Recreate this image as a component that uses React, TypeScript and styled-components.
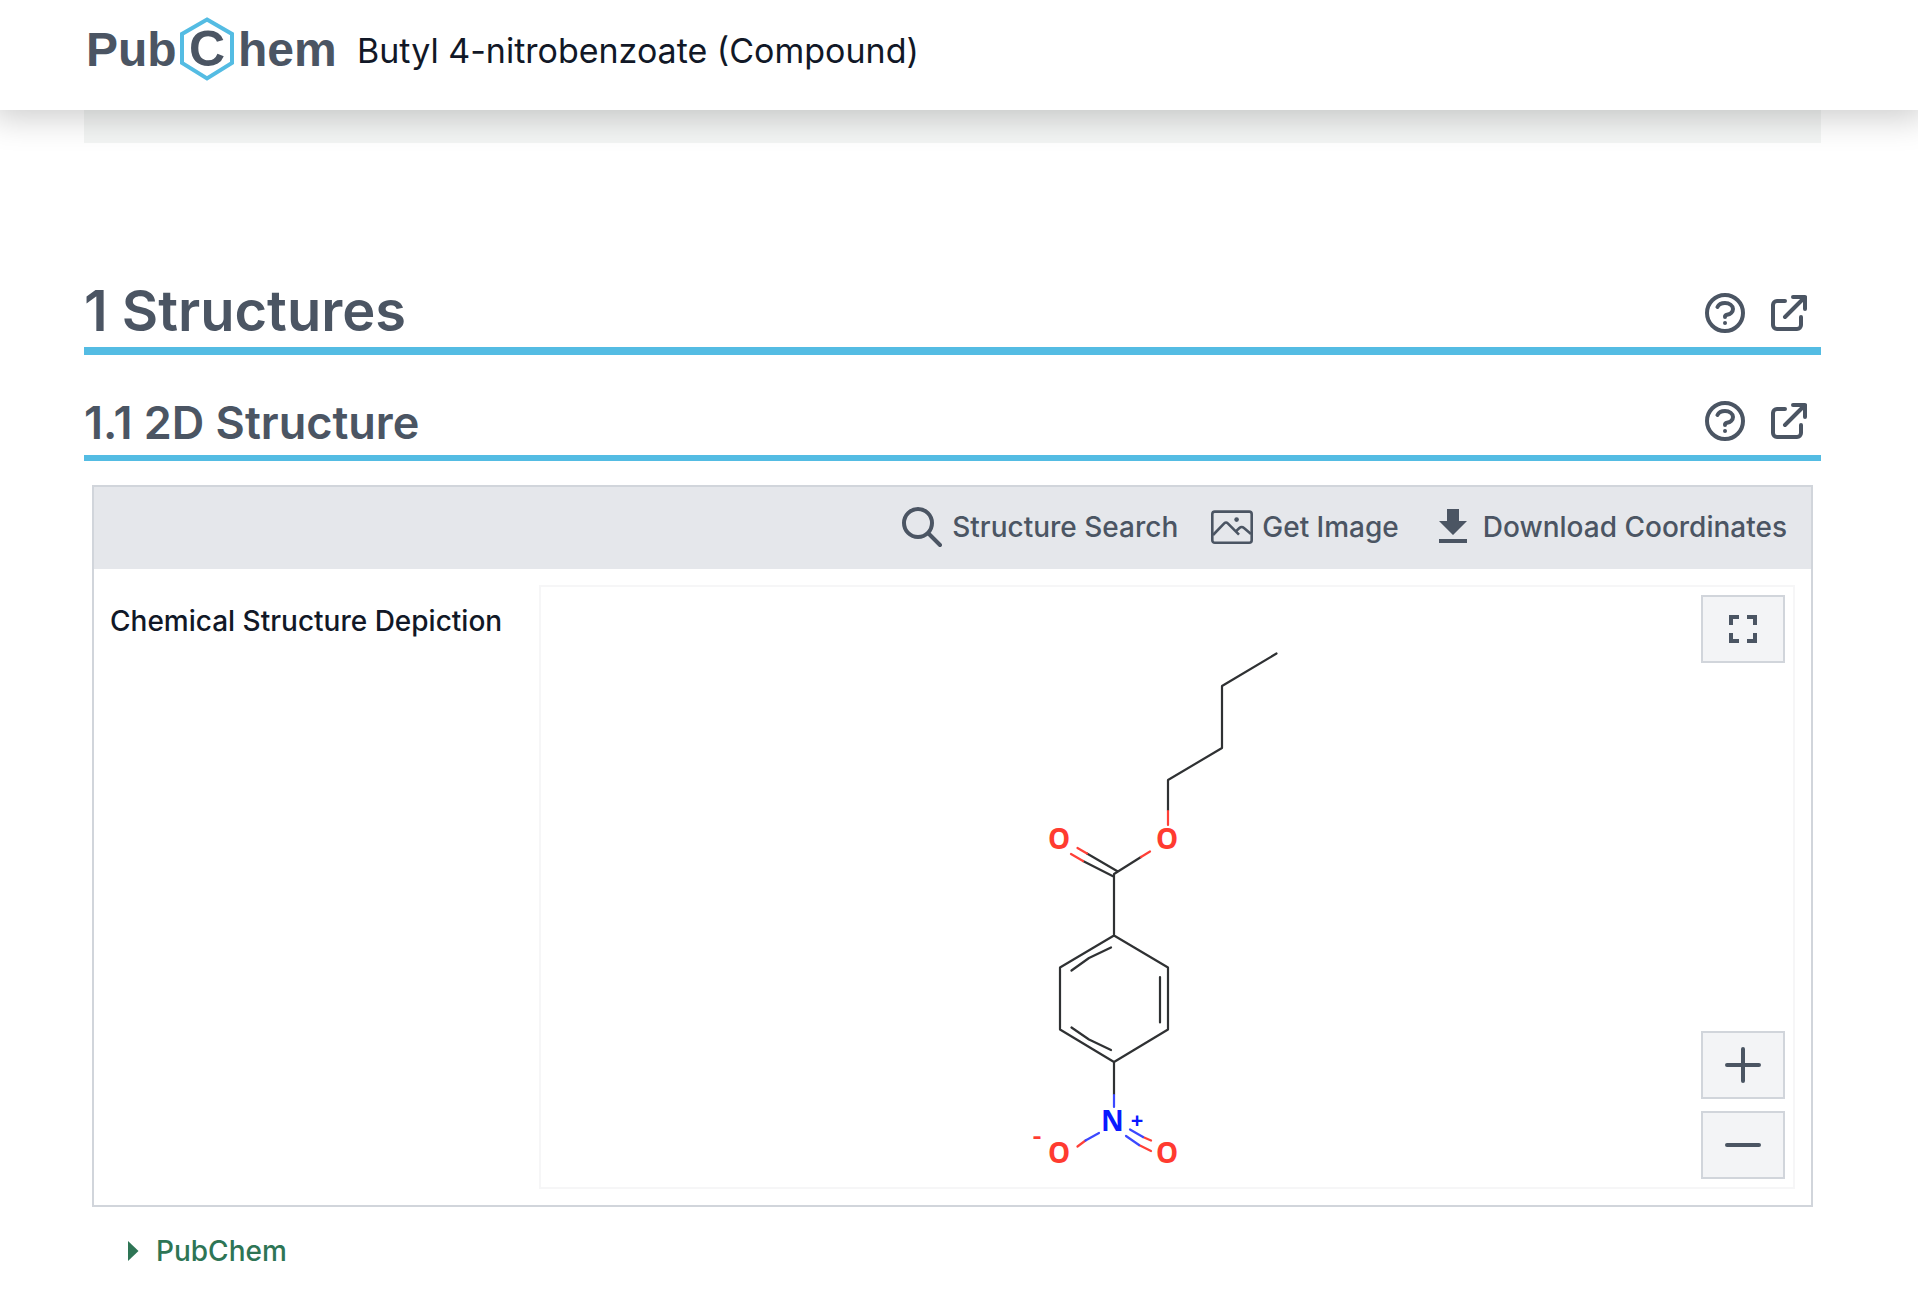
import React from "react";
import styled, { createGlobalStyle } from "styled-components";

const color = {
  ink: "#111827",
  slate: "#4b5563",
  line: "#d1d5db",
  bar: "#e5e7eb",
  button: "#f3f4f6",
  accent: "#54bce3",
  link: "#2e7555",
};

const GlobalStyle = createGlobalStyle`
  *, *::before, *::after { box-sizing: border-box; }
  html, body { margin: 0; background: #fff; }
  body {
    font-family: Inter, "Liberation Sans", sans-serif;
    font-size: 28px;
    line-height: 40px;
    color: ${color.ink};
    overflow-x: hidden;
  }
  button { font: inherit; color: inherit; cursor: pointer; }
`;

const Header = styled.header`
  position: relative;
  z-index: 1;
  display: flex;
  align-items: flex-start;
  gap: 18px;
  height: 110px;
  padding: 16px 84px 0;
  background: #fff;
  box-shadow: 0 0 32px 8px rgba(0, 0, 0, 0.2);
`;

const LogoLink = styled.a`
  display: block;
  height: 68px;
`;

const CompoundName = styled.span`
  font-size: 34px;
  line-height: 70px;
`;

const Main = styled.main`
  padding: 0 97px 32px 84px;
`;

const Band = styled.div`
  height: 33px;
  background: #f3f5f4;
`;

const Section = styled.section`
  padding-top: 136px;
`;

const SubSection = styled.section`
  padding-top: 32px;
`;

const HeadingRow = styled.div<{ $rule: number; $space: number }>`
  display: flex;
  align-items: flex-end;
  justify-content: space-between;
  height: ${(p) => p.$space + p.$rule}px;
  padding-bottom: 6px;
  border-bottom: ${(p) => p.$rule}px solid ${color.accent};
  color: ${color.slate};
`;

const Title = styled.h2<{ $size: number; $line: number }>`
  margin: 0;
  font-size: ${(p) => p.$size}px;
  line-height: ${(p) => p.$line}px;
  font-weight: 600;
`;

const HeadingActions = styled.div`
  display: flex;
  gap: 16px;
  padding: 0 8px 4px 0;
`;

const IconButton = styled.button`
  display: flex;
  padding: 0;
  border: 0;
  background: none;
`;

const Card = styled.div`
  margin: 24px 8px 0;
  border: 2px solid ${color.line};
`;

const Toolbar = styled.div`
  display: flex;
  justify-content: flex-end;
  gap: 30px;
  padding: 16px 24px;
  background: ${color.bar};
  border-bottom: 2px solid ${color.bar};
  color: ${color.slate};
`;

const ToolButton = styled.button`
  display: flex;
  align-items: center;
  gap: 6px;
  padding: 0;
  border: 0;
  background: none;
  && { font-weight: 500; }
`;

const Row = styled.div`
  display: grid;
  grid-template-columns: 1fr 3fr;
  padding: 16px 0;
`;

const RowLabel = styled.h3`
  margin: 0;
  padding: 16px 16px 0;
  font-size: 28px;
  line-height: 40px;
  font-weight: 500;
`;

const Viewer = styled.div`
  display: grid;
  margin: 0 16px;
  border: 2px solid #f6f6f7;
`;

const Drawing = styled.svg`
  grid-area: 1 / 1;
  justify-self: center;
  display: block;
  width: 600px;
  height: 600px;
`;

const ViewerControls = styled.div`
  grid-area: 1 / 1;
  justify-self: end;
  display: flex;
  flex-direction: column;
  gap: 12px;
  padding: 8px;
`;

const ViewerButton = styled.button<{ $pushDown?: boolean }>`
  display: flex;
  align-items: center;
  justify-content: center;
  width: 84px;
  height: 68px;
  padding: 0;
  margin-top: ${(p) => (p.$pushDown ? "auto" : "0")};
  border: 2px solid ${color.line};
  background: ${color.button};
  && { color: ${color.slate}; }
`;

const SourceLink = styled.a`
  display: inline-flex;
  align-items: center;
  gap: 17px;
  margin: 24px 0 0 44px;
  font-weight: 500;
  color: ${color.link};
  text-decoration: none;
`;

function StrokeIcon({ d }: { d: string }) {
  return (
    <svg width="48" height="48" viewBox="0 0 24 24" fill="none" stroke="currentColor" strokeWidth="2" strokeLinecap="round" strokeLinejoin="round" aria-hidden="true">
      <path d={d} />
    </svg>
  );
}

function FillIcon({ d }: { d: string }) {
  return (
    <svg width="48" height="48" viewBox="0 0 24 24" fill="currentColor" aria-hidden="true">
      <path d={d} />
    </svg>
  );
}

const icons = {
  help: "M8.228 9c.549-1.165 2.03-2 3.772-2 2.21 0 4 1.343 4 3 0 1.4-1.278 2.575-3.006 2.907-.542.104-.994.54-.994 1.093m0 3h.01M21 12a9 9 0 11-18 0 9 9 0 0118 0z",
  open: "M10 6H6a2 2 0 00-2 2v10a2 2 0 002 2h10a2 2 0 002-2v-4M14 4h6m0 0v6m0-6L10 14",
  search: "M21 21l-6-6m2-5a7 7 0 11-14 0 7 7 0 0114 0z",
  plus: "M12 4v16m8-8H4",
  minus: "M20 12H4",
  download: "M19 9h-4V3H9v6H5l7 7 7-7zM5 18v2h14v-2z",
  fullscreen: "M7 14H5v5h5v-2H7v-3zm-2-4h2V7h3V5H5v5zm12 7h-3v2h5v-5h-2v3zM14 5v2h3v3h2V5h-5z",
};

function ImageIcon() {
  return (
    <svg width="48" height="48" viewBox="0 0 48 48" fill="none" stroke="currentColor" strokeWidth="2.6" strokeLinejoin="round" aria-hidden="true">
      <rect x="4.3" y="8.6" width="39.4" height="31.2" rx="2.5" />
      <path d="M5 32 16.2 20.4Q18 18.6 19.8 20.4L31 31.6M27.6 28.6 31.4 25Q33.6 23 36 25L43 31" />
      <circle cx="28.6" cy="16.6" r="2.3" fill="currentColor" stroke="none" />
    </svg>
  );
}

function Logo() {
  return (
    <svg width="255" height="68" viewBox="0 0 255 68" role="img" aria-label="PubChem">
      <g fill={color.slate} fontFamily='"Liberation Sans", Arial, sans-serif' fontWeight="700" fontSize="48">
        <text x="2" y="50">Pub</text>
        <text x="105" y="50" fontSize="50">C</text>
        <text x="154" y="50">hem</text>
      </g>
      <path d="M123 3.5 148 18v29L123 62.5 98 47V18z" fill="none" stroke={color.accent} strokeWidth="4" />
    </svg>
  );
}

const bonds: { stroke: string; d: string }[] = [
  {
    stroke: "#2f3133",
    d: "M409.5 66.5 355 99V161L301 193V224M274 270 247 287V348.5M220 266.5 250 284M216 274 245.5 289M247 348.5 301 380.5V442.5L247 475 193 442.5V380.5ZM293 390V435.5M244 360.5 222 371 204.5 383.5M244 463 222 452.5 204.5 440.5M247 475V508",
  },
  { stroke: "#ff4038", d: "M301 224V238M283 264.5 274 270M210.5 261 220 266.5M204 267 216 274M218.5 553.5 210.5 559.5M276 550 284 553.5M272 558 284 564" },
  { stroke: "#3b48ff", d: "M247 508V520M232 546 218.5 553.5M263 542.5 276 550M259 549 272 558" },
];

function Molecule() {
  return (
    <Drawing viewBox="0 0 600 600" role="img" aria-label="Butyl 4-nitrobenzoate">
      {bonds.map((b) => (
        <path key={b.stroke} d={b.d} fill="none" stroke={b.stroke} strokeWidth="2.2" strokeLinecap="round" strokeLinejoin="round" />
      ))}
      <g fontFamily='"Noto Sans", sans-serif' fontWeight="700" fontSize="28" textAnchor="middle">
        <g fill="#ff3b30">
          <text x="192" y="262">O</text>
          <text x="300" y="262">O</text>
          <text x="192" y="576">O</text>
          <text x="300" y="576">O</text>
          <text x="170" y="558" fontWeight="500">-</text>
        </g>
        <g fill="#0a19ff">
          <text x="245.5" y="544">N</text>
          <text x="270" y="541" fontSize="22">+</text>
        </g>
      </g>
    </Drawing>
  );
}

interface HeadingProps {
  text: string;
  size: number;
  line: number;
  rule: number;
}

function Heading({ text, size, line, rule }: HeadingProps) {
  return (
    <HeadingRow $rule={rule} $space={68}>
      <Title $size={size} $line={line}>{text}</Title>
      <HeadingActions>
        <IconButton type="button" aria-label={`Help for ${text}`}>
          <StrokeIcon d={icons.help} />
        </IconButton>
        <IconButton type="button" aria-label={`Open ${text} in a new window`}>
          <StrokeIcon d={icons.open} />
        </IconButton>
      </HeadingActions>
    </HeadingRow>
  );
}

export default function App() {
  return (
    <>
      <GlobalStyle />
      <Header>
        <LogoLink href="#" aria-label="PubChem home">
          <Logo />
        </LogoLink>
        <CompoundName>Butyl 4-nitrobenzoate (Compound)</CompoundName>
      </Header>
      <Main>
        <Band />
        <Section>
          <Heading text="1 Structures" size={56} line={60} rule={8} />
          <SubSection>
            <Heading text="1.1 2D Structure" size={45} line={52} rule={6} />
            <Card>
              <Toolbar>
                <ToolButton type="button">
                  <StrokeIcon d={icons.search} />
                  Structure Search
                </ToolButton>
                <ToolButton type="button">
                  <ImageIcon />
                  Get Image
                </ToolButton>
                <ToolButton type="button">
                  <FillIcon d={icons.download} />
                  Download Coordinates
                </ToolButton>
              </Toolbar>
              <Row>
                <RowLabel>Chemical Structure Depiction</RowLabel>
                <Viewer>
                  <Molecule />
                  <ViewerControls>
                    <ViewerButton type="button" aria-label="Full screen">
                      <FillIcon d={icons.fullscreen} />
                    </ViewerButton>
                    <ViewerButton type="button" aria-label="Zoom in" $pushDown>
                      <StrokeIcon d={icons.plus} />
                    </ViewerButton>
                    <ViewerButton type="button" aria-label="Zoom out">
                      <StrokeIcon d={icons.minus} />
                    </ViewerButton>
                  </ViewerControls>
                </Viewer>
              </Row>
            </Card>
            <SourceLink href="#">
              <svg width="11" height="20" viewBox="0 0 11 20" aria-hidden="true">
                <path d="M0 0 10.5 10 0 20z" fill="currentColor" />
              </svg>
              PubChem
            </SourceLink>
          </SubSection>
        </Section>
      </Main>
    </>
  );
}
